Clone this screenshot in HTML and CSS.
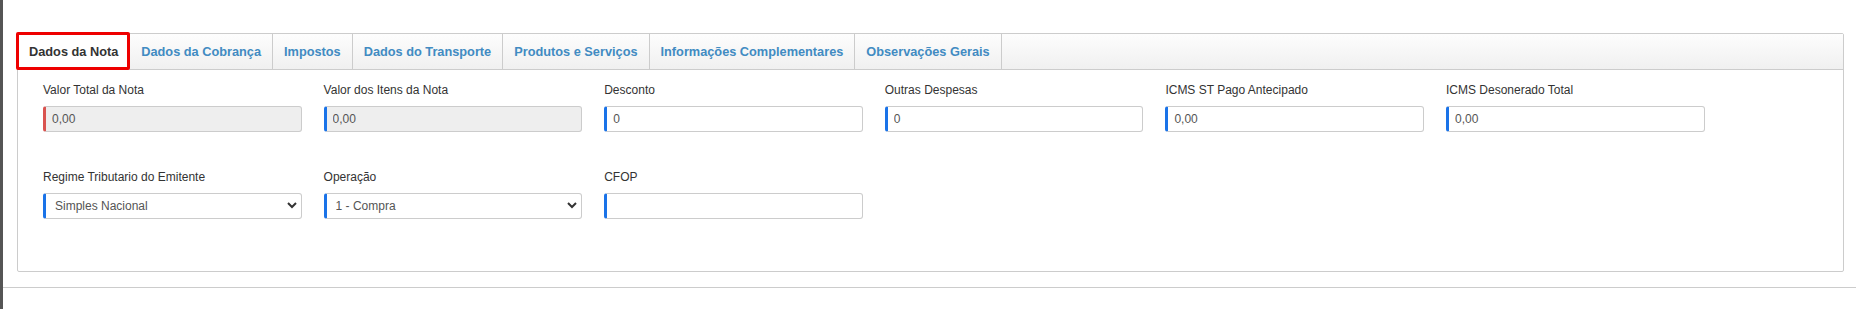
FILE: index.html
```html
<!DOCTYPE html>
<html>
    <head>
        <meta charset="UTF-8">
        <meta name="viewport" content="width=device-width, initial-scale=1.0">
        <link rel="stylesheet" href="styles.css">
        <title>Dados da Nota</title>
    </head>
    <body>
        <div id="page">
            <div class="content">
                <div class="panel">
                    <ul class="tabs">
                        <li class="tab active">Dados da Nota</li>
                        <li class="tab">Dados da Cobrança</li>
                        <li class="tab">Impostos</li>
                        <li class="tab">Dados do Transporte</li>
                        <li class="tab">Produtos e Serviços</li>
                        <li class="tab">Informações Complementares</li>
                        <li class="tab">Observações Gerais</li>
                    </ul>

                    <div class="panel-body">
                        <div class="row">
                            <div class="field">
                                <label>Valor Total da Nota</label>
                                <input class="ctl ctl-red" type="text" value="0,00" readonly>
                            </div>
                            <div class="field">
                                <label>Valor dos Itens da Nota</label>
                                <input class="ctl" type="text" value="0,00" readonly>
                            </div>
                            <div class="field">
                                <label>Desconto</label>
                                <input class="ctl" type="text" value="0">
                            </div>
                            <div class="field">
                                <label>Outras Despesas</label>
                                <input class="ctl" type="text" value="0">
                            </div>
                            <div class="field">
                                <label>ICMS ST Pago Antecipado</label>
                                <input class="ctl" type="text" value="0,00">
                            </div>
                            <div class="field">
                                <label>ICMS Desonerado Total</label>
                                <input class="ctl" type="text" value="0,00">
                            </div>
                        </div>

                        <div class="row">
                            <div class="field">
                                <label>Regime Tributario do Emitente</label>
                                <div class="select-wrap">
                                    <select class="ctl">
                                        <option>Simples Nacional</option>
                                    </select>
                                    <svg class="chevron" width="10" height="7" viewBox="0 0 10 7"><polyline points="1,1 5,5 9,1" fill="none" stroke="#333" stroke-width="2"/></svg>
                                </div>
                            </div>
                            <div class="field">
                                <label>Operação</label>
                                <div class="select-wrap">
                                    <select class="ctl">
                                        <option>1 - Compra</option>
                                    </select>
                                    <svg class="chevron" width="10" height="7" viewBox="0 0 10 7"><polyline points="1,1 5,5 9,1" fill="none" stroke="#333" stroke-width="2"/></svg>
                                </div>
                            </div>
                            <div class="field">
                                <label>CFOP</label>
                                <input class="ctl" type="text" value="">
                            </div>
                        </div>
                    </div>
                </div>
            </div>
        </div>
    </body>
</html>
```

FILE: styles.css
```css
body {
    margin: 0;
    padding: 0;
    background: #fff;
    font-family: "Liberation Sans", Arial, sans-serif;
}

#page {
    min-height: 100vh;
    border-left: 3px solid #555;
    box-sizing: border-box;
}

.content {
    padding: 33px 12px 15px 14px;
    border-bottom: 1px solid #ccc;
}

.panel {
    border: 1px solid #ccc;
    border-radius: 0 2px 2px 2px;
}

.tabs {
    display: flex;
    margin: 0;
    padding: 0;
    list-style: none;
    height: 35px;
    background: linear-gradient(#fdfdfd, #f0f0f0);
    border-bottom: 1px solid #ccc;
}

.tab {
    padding: 0 11px;
    border-right: 1px solid #ccc;
    font-size: 12.75px;
    font-weight: bold;
    line-height: 35px;
    color: #418bc2;
    white-space: nowrap;
}

.tab.active {
    position: relative;
    background: #fff;
    color: #333;
}

.tab.active::after {
    content: "";
    position: absolute;
    top: -2px;
    left: -2px;
    right: -1px;
    bottom: -1px;
    border: 3px solid #e00;
    border-radius: 2px;
}

.panel-body {
    padding: 12px 25px 15px 25px;
}

.row {
    display: grid;
    grid-template-columns: repeat(6, 258.6px);
    column-gap: 22px;
    margin-bottom: 37px;
}

label {
    display: block;
    margin-bottom: 7px;
    font-size: 12px;
    line-height: 17px;
    color: #333;
}

.ctl {
    display: block;
    width: 100%;
    height: 26px;
    margin: 0;
    padding: 0 6px;
    box-sizing: border-box;
    border: 1px solid #ccc;
    border-left: 3px solid #1a73e8;
    border-radius: 3px;
    background: #fff;
    font-family: "Liberation Sans", Arial, sans-serif;
    font-size: 12px;
    color: #555;
    outline: none;
}

.ctl[readonly] {
    background: #eee;
}

.ctl-red {
    border-left-color: #d9534f;
}

.select-wrap {
    position: relative;
}

select.ctl {
    appearance: none;
    -webkit-appearance: none;
    padding-left: 9px;
}

.chevron {
    position: absolute;
    right: 5px;
    top: 9px;
    pointer-events: none;
}
```
